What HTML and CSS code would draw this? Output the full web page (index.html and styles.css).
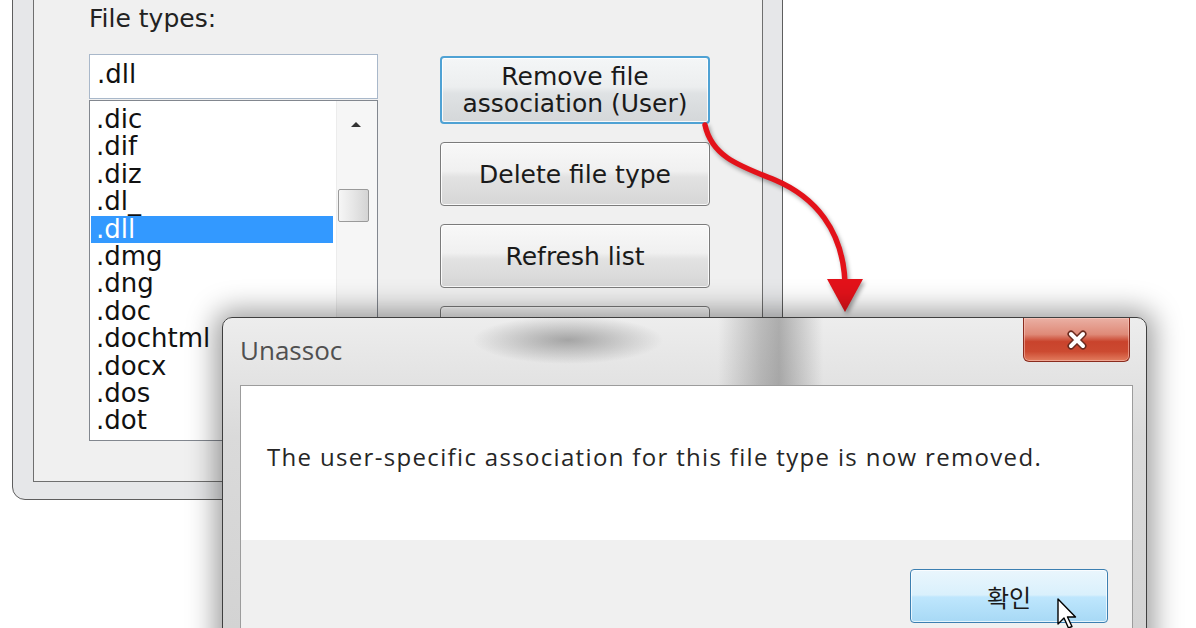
FILE: index.html
```html
<!DOCTYPE html>
<html>
<head>
<meta charset="utf-8">
<link rel="stylesheet" href="styles.css">
</head>
<body>
<div class="main">
  <div class="client">
    <div class="col-left">
      <div class="label">File types:</div>
      <div class="edit">.dll</div>
      <div class="list">
        <ul class="items">
          <li>.dic</li>
          <li>.dif</li>
          <li>.diz</li>
          <li>.dl_</li>
          <li class="sel">.dll</li>
          <li>.dmg</li>
          <li>.dng</li>
          <li>.doc</li>
          <li>.dochtml</li>
          <li>.docx</li>
          <li>.dos</li>
          <li>.dot</li>
        </ul>
        <div class="vscroll">
          <div class="up"></div>
          <div class="thumb"></div>
        </div>
      </div>
    </div>
    <div class="btns">
      <div class="btn focus">Remove file<br>association (User)</div>
      <div class="btn">Delete file type</div>
      <div class="btn">Refresh list</div>
      <div class="btn">About</div>
    </div>
  </div>
</div>

<svg class="arrow" width="1196" height="628" viewBox="0 0 1196 628">
  <path d="M705 125 C 712 157, 740 166, 775 180 C 815 197, 843 230, 845 283" fill="none" stroke="#e3121a" stroke-width="5.5" stroke-linecap="round"/>
  <polygon points="827,279 863,279 845,312" fill="#e3121a"/>
</svg>

<div class="dlg">
  <div class="tbar">
    <div class="title">Unassoc</div>
    <div class="close">
      <svg width="26" height="22" viewBox="0 0 26 22">
        <path d="M7 5 L19 17 M19 5 L7 17" stroke="#6a2a1e" stroke-width="7" stroke-linecap="round"/>
        <path d="M7 5 L19 17 M19 5 L7 17" stroke="#ffffff" stroke-width="4" stroke-linecap="round"/>
      </svg>
    </div>
  </div>
  <div class="content">
    <div class="msg">The user-specific association for this file type is now removed.</div>
    <div class="foot">
      <div class="ok">확인</div>
    </div>
  </div>
</div>

<svg class="cursor" width="24" height="34" viewBox="0 0 24 34">
  <path d="M1 1 L1 26 L7 20 L11.5 30 L15 28.5 L10.5 19 L18.5 19 Z" fill="#ffffff" stroke="#000000" stroke-width="1.4" stroke-linejoin="round"/>
</svg>
</body>
</html>
```
FILE: styles.css
```css
body {
  margin: 0;
  width: 1196px;
  height: 628px;
  overflow: hidden;
  background: #ffffff;
  position: relative;
  font-family: "DejaVu Sans", "Liberation Sans", sans-serif;
}

.main {
  position: absolute;
  left: 12px;
  top: -40px;
  width: 771px;
  height: 540px;
  box-sizing: border-box;
  border: 1px solid #5e5e5e;
  border-radius: 0 0 13px 13px;
  background: #e6e7e9;
  padding: 0 19px 17px 20px;
}

.client {
  box-sizing: border-box;
  height: 100%;
  border: 1px solid #6f6f6f;
  border-top: none;
  background: #f0f0f0;
  display: flex;
  gap: 62px;
  padding: 43px 0 0 55px;
}

.col-left {
  width: 289px;
  display: flex;
  flex-direction: column;
}

.label {
  font-size: 25px;
  line-height: 30px;
  height: 30px;
  color: #222222;
}

.edit {
  margin-top: 20px;
  height: 45px;
  box-sizing: border-box;
  border: 1px solid #a9b8ca;
  background: #ffffff;
  font-size: 26px;
  line-height: 38px;
  padding-left: 7px;
  color: #111111;
}

.list {
  margin-top: 1px;
  height: 341px;
  box-sizing: border-box;
  border: 1px solid #82878f;
  background: #ffffff;
  display: flex;
}

.items {
  list-style: none;
  margin: 0;
  padding: 5px 3px 0 1px;
  flex: 1;
  font-size: 26px;
  line-height: 27.4px;
}

.items li {
  padding-left: 5px;
  color: #111111;
  white-space: nowrap;
}

.items li.sel {
  background: #3399ff;
  color: #ffffff;
}

.vscroll {
  width: 40px;
  background: #f6f6f6;
  border-left: 1px solid #ececec;
  display: flex;
  flex-direction: column;
  align-items: flex-start;
}

.up {
  width: 0;
  height: 0;
  border-left: 5px solid transparent;
  border-right: 5px solid transparent;
  border-bottom: 5px solid #333333;
  margin: 21px 0 0 14px;
}

.thumb {
  margin-top: 62px;
  margin-left: 1px;
  width: 31px;
  height: 33px;
  box-sizing: border-box;
  border: 1px solid #9a9a9a;
  border-radius: 2px;
  background: linear-gradient(to right, #f6f6f6, #e6e6e6 50%, #d4d4d4);
}

.btns {
  width: 270px;
  display: flex;
  flex-direction: column;
  gap: 18px;
  padding-top: 52px;
}

.btn {
  height: 64px;
  flex: none;
  box-sizing: border-box;
  border: 1px solid #7b7b7b;
  border-radius: 4px;
  background: linear-gradient(#f8f8f8, #f0f0f0 45%, #e2e2e2 55%, #d6d6d6);
  box-shadow: inset 0 0 0 1px rgba(255, 255, 255, 0.85);
  font-size: 25px;
  line-height: 27px;
  color: #1a1a1a;
  display: flex;
  align-items: center;
  justify-content: center;
  text-align: center;
}

.btn.focus {
  height: 68px;
  border: 2px solid #4fa2d4;
  background: linear-gradient(#f4f6f7, #eceeef 45%, #dfe2e4 55%, #d4d7d9);
}

.arrow {
  position: absolute;
  left: 0;
  top: 0;
  z-index: 2;
  pointer-events: none;
  filter: drop-shadow(2px 3px 2px rgba(0, 0, 0, 0.35));
}

.dlg {
  position: absolute;
  left: 222px;
  top: 317px;
  width: 925px;
  height: 340px;
  z-index: 3;
  box-sizing: border-box;
  border: 1px solid #3f3f3f;
  border-radius: 10px 10px 0 0;
  padding: 0 13px 0 17px;
  background:
    radial-gradient(95px 24px at 345px 22px, rgba(80, 80, 80, 0.45), rgba(80, 80, 80, 0)),
    linear-gradient(to right, rgba(60, 60, 60, 0) 495px, rgba(60, 60, 60, 0.28) 538px, rgba(60, 60, 60, 0.36) 556px, rgba(60, 60, 60, 0) 600px),
    linear-gradient(#ededed, #dadada 35%, #d2d2d2 100%);
  box-shadow: 0 0 28px 7px rgba(0, 0, 0, 0.38);
  display: flex;
  flex-direction: column;
  font-family: "Open Sans", "Noto Sans", sans-serif;
}

.tbar {
  height: 67px;
  flex: none;
  display: flex;
  justify-content: space-between;
  align-items: flex-start;
}

.title {
  font-size: 26px;
  line-height: 36px;
  padding-top: 14px;
  color: #505050;
}

.close {
  width: 107px;
  height: 44px;
  margin-right: 3px;
  box-sizing: border-box;
  border: 1px solid #8a2c1f;
  border-top: none;
  border-radius: 0 0 6px 6px;
  background: linear-gradient(#eab0a4 0%, #df8a78 38%, #c9432c 55%, #cc4a31 78%, #e27d5f 100%);
  box-shadow: inset 0 0 0 1px rgba(255, 210, 200, 0.5);
  display: flex;
  align-items: center;
  justify-content: center;
}

.content {
  flex: 1;
  border: 1px solid #9c9c9c;
  border-bottom: none;
  background: #ffffff;
  display: flex;
  flex-direction: column;
}

.msg {
  height: 154px;
  flex: none;
  box-sizing: border-box;
  padding: 55px 0 0 26px;
  font-size: 24px;
  line-height: 32px;
  letter-spacing: 1.33px;
  color: #262626;
  white-space: nowrap;
}

.foot {
  flex: 1;
  background: #f0f0f0;
  display: flex;
  justify-content: flex-end;
  align-items: flex-start;
  padding: 29px 24px 0 0;
}

.ok {
  width: 198px;
  height: 54px;
  box-sizing: border-box;
  border: 1px solid #3c7fb1;
  border-radius: 4px;
  background: linear-gradient(#eaf6fd, #d9f0fc 48%, #bee6fd 52%, #a7d9f5);
  box-shadow: inset 0 0 0 1px rgba(255, 255, 255, 0.7);
  font-family: "Noto Sans CJK KR", sans-serif;
  font-size: 24px;
  color: #1a1a1a;
  display: flex;
  align-items: center;
  justify-content: center;
}

.cursor {
  position: absolute;
  left: 1057px;
  top: 598px;
  z-index: 4;
}
```
